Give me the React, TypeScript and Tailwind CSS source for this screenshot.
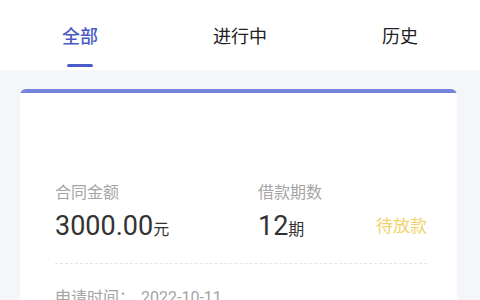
const FONT = "font-['Roboto','Noto_Sans_CJK_SC',sans-serif]";

const TABS = ['全部', '进行中', '历史'];

function TabBar({ active }: { active: number }) {
  return (
    <div className="grid h-[70px] grid-cols-3 bg-white">
      {TABS.map((t, i) => (
        <div key={t} className="flex flex-col items-center pt-[26px]">
          <span
            className={
              i === active
                ? 'text-[18px] leading-[22px] font-medium text-[#4a5ac6]'
                : 'text-[18px] leading-[22px] text-[#222]'
            }
          >
            {t}
          </span>
          {i === active && <span className="mt-[16px] h-[3px] w-[26px] rounded-full bg-[#4a5ac6]" />}
        </div>
      ))}
    </div>
  );
}

export default function App() {
  return (
    <div className={`h-[300px] w-[480px] overflow-hidden bg-[#f4f6fa] ${FONT}`}>
      <TabBar active={0} />
      <div className="ml-[20px] mr-[23px] mt-[19px] overflow-hidden rounded-t-[6px] bg-white">
        <div className="h-[4px] bg-[#7384da]" />
        <div className="px-[35px] pr-[30px] pt-[90px]">
          <div className="flex items-end">
            <div className="w-[203px]">
              <div className="text-[16px] leading-[20px] text-[#a5a5a5]">合同金额</div>
              <div className="mt-[6px] flex items-baseline text-[#333]">
                <span className="text-[27px] leading-[34px]">3000.00</span>
                <span className="text-[16px]">元</span>
              </div>
            </div>
            <div className="flex-1">
              <div className="text-[16px] leading-[20px] text-[#a5a5a5]">借款期数</div>
              <div className="mt-[6px] flex items-baseline text-[#333]">
                <span className="text-[27px] leading-[34px]">12</span>
                <span className="text-[16px]">期</span>
              </div>
            </div>
            <div className="pb-[6px] text-[17px] leading-[22px] text-[#f1d46a]">待放款</div>
          </div>
          <div className="mt-[20px] border-t border-dashed border-[#e6e6e6]" />
          <div className="mt-[24px] flex text-[16px] leading-[20px] text-[#a5a5a5]">
            <span className="w-[86px]">申请时间：</span>
            <span>2022-10-11</span>
          </div>
        </div>
      </div>
    </div>
  );
}
